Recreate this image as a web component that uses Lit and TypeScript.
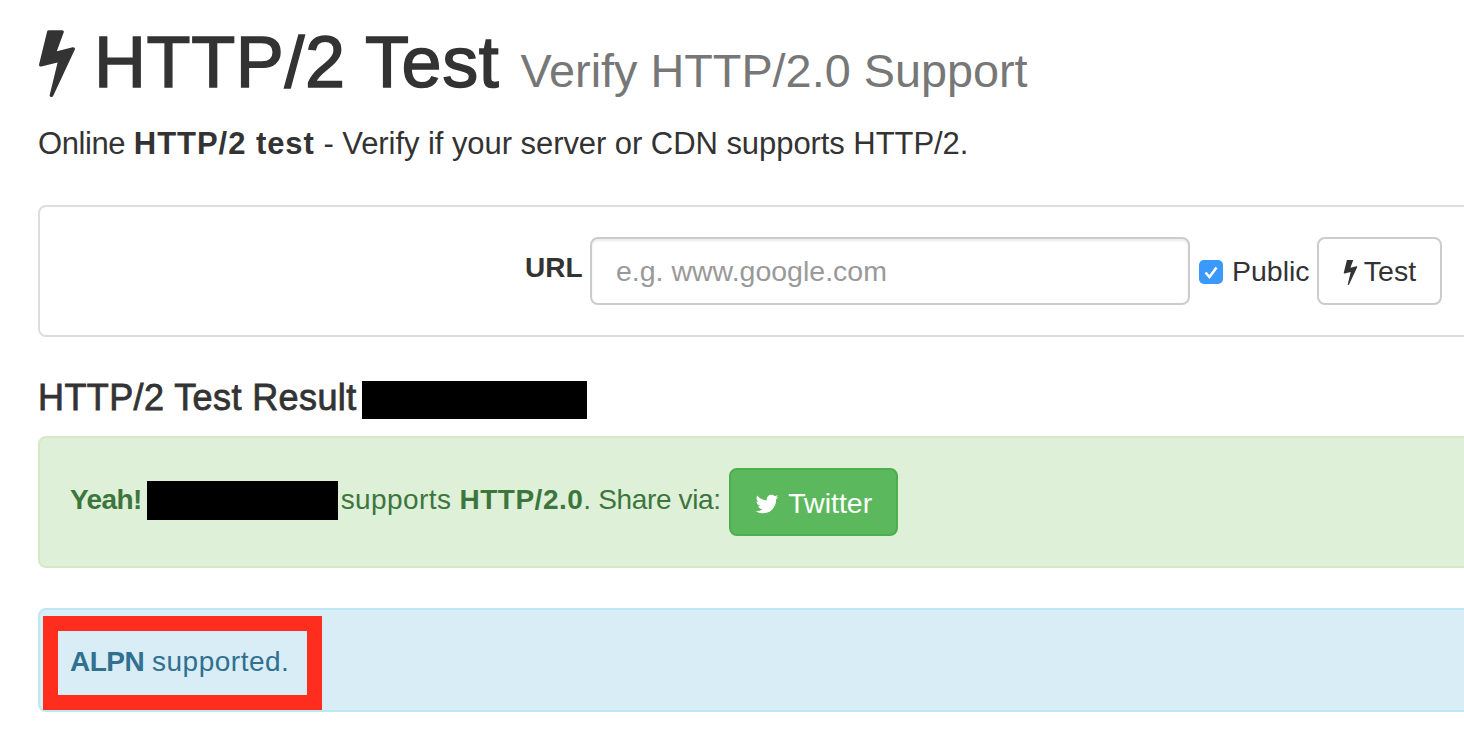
import { LitElement, html, css, svg } from "lit";
import { customElement } from "lit/decorators.js";

const bolt = svg`<path fill="currentColor" d="M1333 566q18 20 7 44l-540 1157q-13 25-42 25-4 0-14-2-17-5-25.5-19t-4.5-30l197-808-406 101q-4 1-12 1-18 0-31-11-18-15-13-39l201-825q4-14 16-23t28-9h328q19 0 32 12.5t13 29.5q0 8-5 18l-171 463 396-98q8-2 12-2 19 0 34 15z"/>`;
const bird = svg`<path fill="currentColor" d="M1684 408q-67 98-162 167 1 14 1 42 0 130-38 259.5t-115.5 248.5-184.5 210.5-258 146-323 54.5q-271 0-496-145 35 4 78 4 225 0 401-138-105-2-188-64.5t-114-159.5q33 5 61 5 43 0 85-11-112-23-185.5-111.5t-73.5-205.5v-4q68 38 146 41-66-44-105-115t-39-154q0-88 44-163 121 149 294.5 238.5t371.5 99.5q-8-38-8-74 0-134 94.5-228.5t228.5-94.5q140 0 236 102 109-21 205-78-37 115-142 181 98-10 196-53z"/>`;

@customElement("app-root")
export class AppRoot extends LitElement {
  static styles = css`
    :host {
      display: block;
      position: relative;
      width: 1464px;
      height: 740px;
      overflow: hidden;
      background: #fff;
      font-family: "Liberation Sans", Arial, sans-serif;
      color: #333;
    }
    .page { width: 1500px; padding-left: 38px; box-sizing: border-box; }
    h1 {
      margin: 0;
      padding-top: 20px;
      height: 84px;
      display: flex;
      align-items: baseline;
      font-weight: 400;
      font-size: 72px;
      line-height: 84px;
      white-space: nowrap;
    }
    .h1-bolt { width: 72px; height: 72px; margin: 5px 1px 0 -17px; flex: none; align-self: flex-start; }
    .h1-text { letter-spacing: 0.6px; -webkit-text-stroke: 1.5px #333; }
    small { font-size: 46.8px; font-weight: 400; color: #777; margin-left: 21px; }
    .lead { margin: 20px 0 0; font-size: 31px; line-height: 40px; height: 40px; font-weight: 400; white-space: nowrap; }
    .lead .on { letter-spacing: -0.4px; }
    .lead b { letter-spacing: 0.95px; }
    .lead .tail { letter-spacing: -0.06px; }
    .panel {
      margin-top: 41px;
      height: 132px;
      box-sizing: border-box;
      border: 2px solid #ddd;
      border-radius: 8px;
      padding-top: 30px;
      width: 1500px;
    }
    form { display: flex; align-items: center; padding-left: 485px; height: 68px; font-size: 28.5px; }
    label.url { font-weight: 700; font-size: 28px; width: 65px; flex: none; margin-top: -6px; }
    .input {
      width: 600px; height: 68px; box-sizing: border-box; flex: none;
      border: 2px solid #ccc; border-radius: 8px;
      padding-left: 24px; display: flex; align-items: center;
      color: #999;
      box-shadow: inset 0 2px 2px rgba(0,0,0,.075);
    }
    .check {
      width: 24px; height: 24px; margin: 2px 0 0 9px; flex: none;
      background: #3b99fc; border-radius: 5px; display: flex; align-items: center; justify-content: center;
    }
    .public { margin-left: 9px; width: 85px; flex: none; }
    .btn-test {
      width: 125px; height: 68px; box-sizing: border-box; flex: none;
      border: 2px solid #ccc; border-radius: 8px; background: #fff;
      display: flex; align-items: center; justify-content: center; gap: 7px;
    }
    .btn-test svg { width: 27px; height: 27px; margin: 0 -7px 0 -6px; }
    h3 {
      margin: 41px 0 0; font-size: 36px; line-height: 40px; height: 40px; font-weight: 400;
      display: flex; align-items: center; white-space: nowrap;
      letter-spacing: 0.4px;
    }
    h3 span:first-child { -webkit-text-stroke: 0.8px #333; }
    .redact { background: #000; display: inline-block; flex: none; }
    .r1 { width: 225px; height: 38px; margin: 4px 0 0 5px; }
    .r2 { width: 191px; height: 39px; margin: 0 3px 3px 5px; }
    .alert {
      width: 1500px; box-sizing: border-box; border-radius: 8px; font-size: 28px; display: flex; align-items: center;
      padding-left: 30px; white-space: nowrap;
    }
    .ok { margin-top: 18px; height: 132px; background: #dff0d8; border: 2px solid #d6e9c6; color: #3c763d; }
    .up { padding-bottom: 5px; }
    .yeah { letter-spacing: -0.6px; }
    .sup { letter-spacing: 0.4px; }
    .h2 { letter-spacing: 0.5px; }
    .share { letter-spacing: -0.35px; }
    .btn-tw {
      margin-left: 8px; width: 169px; height: 68px; box-sizing: border-box; flex: none;
      background: #5cb85c; border: 2px solid #4cae4c; border-radius: 8px; color: #fff;
      display: flex; align-items: center; justify-content: center; gap: 8px;
      padding-top: 3px;
      font-size: 28.5px;
    }
    .btn-tw svg { width: 26px; height: 26px; }
    .info { margin-top: 40px; height: 104px; background: #d9edf7; border: 2px solid #bce8f1; color: #31708f; }
    .down { padding-top: 3px; }
    .alpn { letter-spacing: -0.5px; }
    .supd { letter-spacing: 0.5px; }
    b { font-weight: 700; }
    .mark {
      position: absolute; left: 43px; top: 616px; width: 279px; height: 94px;
      box-sizing: border-box; border: 15px solid #ff2d1e;
    }
  `;

  render() {
    return html`
      <div class="page">
        <h1>
          <svg class="h1-bolt" viewBox="0 0 1792 1792">${bolt}</svg>
          <span class="h1-text">HTTP/2 Test</span>
          <small>Verify HTTP/2.0 Support</small>
        </h1>
        <p class="lead"><span class="on">Online</span> <b>HTTP/2 test</b> <span class="tail">- Verify if your server or CDN supports HTTP/2.</span></p>
        <div class="panel">
          <form>
            <label class="url">URL</label>
            <div class="input">e.g. www.google.com</div>
            <span class="check">
              <svg width="18" height="18" viewBox="0 0 18 18"><path d="M3.5 9.5 L7.5 14 L14.5 4.5" fill="none" stroke="#fff" stroke-width="2.6"/></svg>
            </span>
            <span class="public">Public</span>
            <div class="btn-test"><svg viewBox="0 0 1792 1792">${bolt}</svg><span>Test</span></div>
          </form>
        </div>
        <h3><span>HTTP/2 Test Result</span><span class="redact r1"></span></h3>
        <div class="alert ok">
          <b class="up yeah">Yeah!</b><span class="redact r2"></span><span class="up"><span class="sup">supports </span><b class="h2">HTTP/2.0</b><span class="share">. Share via:</span></span>
          <div class="btn-tw"><svg viewBox="0 0 1792 1792">${bird}</svg><span>Twitter</span></div>
        </div>
        <div class="alert info"><span class="down"><b class="alpn">ALPN</b> <span class="supd">supported.</span></span></div>
      </div>
      <div class="mark"></div>
    `;
  }
}
